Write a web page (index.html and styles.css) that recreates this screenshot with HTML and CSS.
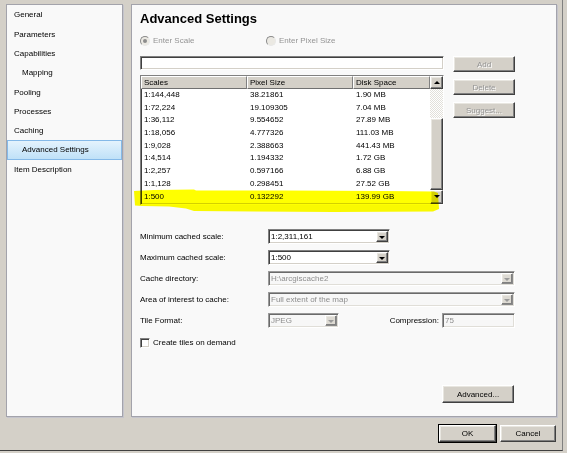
FILE: index.html
```html
<!DOCTYPE html>
<html lang="en">
<head>
    <meta charset="UTF-8">
    <meta name="viewport" content="width=device-width, initial-scale=1.0">
    <title>Service Properties - Advanced Settings</title>
    <link rel="stylesheet" href="styles.css">
</head>
<body>
    <div class="window">
        <div class="panes">
            <ul class="nav">
                <li>General</li>
                <li>Parameters</li>
                <li>Capabilities</li>
                <li class="sub">Mapping</li>
                <li>Pooling</li>
                <li>Processes</li>
                <li>Caching</li>
                <li class="sub selected">Advanced Settings</li>
                <li>Item Description</li>
            </ul>

            <section class="page">
                <h1>Advanced Settings</h1>

                <div class="radios">
                    <label class="radio first"><span class="dot checked"></span>Enter Scale</label>
                    <label class="radio"><span class="dot"></span>Enter Pixel Size</label>
                </div>

                <div class="scales">
                    <div class="scales-main">
                        <div class="field sunken"></div>
                        <div class="list sunken">
                            <div class="grid">
                                <div class="head"><span>Scales</span><span>Pixel Size</span><span>Disk Space</span></div>
                                <div class="row"><span>1:144,448</span><span>38.21861</span><span>1.90 MB</span></div>
                                <div class="row"><span>1:72,224</span><span>19.109305</span><span>7.04 MB</span></div>
                                <div class="row"><span>1:36,112</span><span>9.554652</span><span>27.89 MB</span></div>
                                <div class="row"><span>1:18,056</span><span>4.777326</span><span>111.03 MB</span></div>
                                <div class="row"><span>1:9,028</span><span>2.388663</span><span>441.43 MB</span></div>
                                <div class="row"><span>1:4,514</span><span>1.194332</span><span>1.72 GB</span></div>
                                <div class="row"><span>1:2,257</span><span>0.597166</span><span>6.88 GB</span></div>
                                <div class="row"><span>1:1,128</span><span>0.298451</span><span>27.52 GB</span></div>
                                <div class="row"><span>1:500</span><span>0.132292</span><span>139.99 GB</span></div>
                            </div>
                            <div class="vscroll">
                                <div class="arrow up raised"></div>
                                <div class="track"></div>
                                <div class="thumb raised"></div>
                                <div class="arrow down raised"></div>
                            </div>
                        </div>
                    </div>
                    <div class="side-buttons">
                        <button class="btn raised" disabled>Add</button>
                        <button class="btn raised" disabled>Delete</button>
                        <button class="btn raised" disabled>Suggest...</button>
                    </div>
                </div>

                <div class="form">
                    <span class="label">Minimum cached scale:</span>
                    <div class="combo short"><span class="value">1:2,311,161</span><span class="drop raised"></span></div>

                    <span class="label">Maximum cached scale:</span>
                    <div class="combo short"><span class="value">1:500</span><span class="drop raised"></span></div>

                    <span class="label">Cache directory:</span>
                    <div class="combo disabled"><span class="value">H:\arcgiscache2</span><span class="drop raised"></span></div>

                    <span class="label">Area of interest to cache:</span>
                    <div class="combo disabled"><span class="value">Full extent of the map</span><span class="drop raised"></span></div>

                    <span class="label">Tile Format:</span>
                    <div class="tile-row">
                        <div class="combo disabled tiny"><span class="value">JPEG</span><span class="drop raised"></span></div>
                        <span class="compression">Compression:</span>
                        <div class="field sunken quality">75</div>
                    </div>
                </div>

                <label class="checkbox"><span class="box sunken"></span>Create tiles on demand</label>

                <div class="footer">
                    <button class="btn raised wide">Advanced...</button>
                </div>

                <!-- marker stroke over the last scale row -->
                <svg class="marker" width="306" height="24" viewBox="0 0 306 24">
                    <polygon points="0,2 20,1 60,0.5 62,1.5 150,1.5 250,2 300,2.5 304,4 305,20 299,22.5 200,23 120,22.5 60,22 52,19.5 35,17.5 8,17 1,16.5" />
                </svg>
            </section>
        </div>

        <div class="actions">
            <button class="btn raised default">OK</button>
            <button class="btn raised">Cancel</button>
        </div>
    </div>
</body>
</html>
```

FILE: styles.css
```css
body {
    margin: 0;
    background-color: #d4d0c8;
    font-family: "Liberation Sans", Arial, sans-serif;
    font-size: 8px;
    color: #000;
}
.window {
    width: 563px;
    height: 451px;
    box-sizing: border-box;
    border-right: 1px solid #808080;
    border-bottom: 1px solid #404040;
    padding: 4px 5px 0 6px;
    display: flex;
    flex-direction: column;
}
.panes {
    display: flex;
    gap: 8px;
    height: 413px;
}

/* beveled borders */
.sunken {
    border: 1px solid;
    border-color: #808080 #fff #fff #808080;
    box-shadow: inset 1px 1px #404040, inset -1px -1px #d4d0c8;
    box-sizing: border-box;
}
.raised {
    border: 1px solid;
    border-color: #fff #404040 #404040 #fff;
    box-shadow: inset -1px -1px #808080, inset 1px 1px #e8e6e0;
    background-color: #d4d0c8;
    box-sizing: border-box;
}

/* left navigation */
.nav {
    width: 117px;
    box-sizing: border-box;
    margin: 0;
    padding: 0.35px 0 0;
    list-style: none;
    background-color: #f9f9f9;
    border: 1px solid #a3a3ab;
    box-shadow: 1px 1px #c4c4cc;
}
.nav li {
    height: 19.3px;
    line-height: 19.3px;
    padding-left: 7px;
    box-sizing: border-box;
    white-space: nowrap;
}
.nav li.sub {
    padding-left: 15px;
}
.nav li.selected {
    padding-left: 14px;
    line-height: 17.3px;
    border: 1px solid #84b9e8;
    background: linear-gradient(#e4f3fd, #bfe1f8);
}

/* right page */
.page {
    position: relative;
    width: 426px;
    box-sizing: border-box;
    background-color: #f9f9f9;
    border: 1px solid #a3a3ab;
    box-shadow: 1px 1px #c4c4cc;
    padding: 6px 41px 13px 8px;
    display: flex;
    flex-direction: column;
}
h1 {
    margin: 0;
    font-size: 13px;
    line-height: 16px;
    height: 16px;
    font-weight: bold;
}
.radios {
    display: flex;
    margin-top: 7px;
    height: 13px;
    align-items: center;
    color: #949494;
}
.radio {
    display: flex;
    align-items: center;
    gap: 3px;
}
.radio.first {
    width: 126px;
}
.dot {
    width: 10px;
    height: 10px;
    box-sizing: border-box;
    border-radius: 50%;
    border: 1px solid;
    border-color: #8a8a8a #e8e8e8 #e8e8e8 #8a8a8a;
    background-color: #ebe9e3;
    position: relative;
}
.dot.checked::after {
    content: "";
    position: absolute;
    left: 2px;
    top: 2px;
    width: 4px;
    height: 4px;
    border-radius: 50%;
    background-color: #8c8c8c;
}

/* scales list */
.scales {
    display: flex;
    gap: 9px;
    margin-top: 9px;
}
.scales-main {
    width: 304px;
}
.field {
    height: 14px;
    background-color: #fff;
}
.list {
    margin-top: 5px;
    height: 130px;
    background-color: #fff;
    display: flex;
}
.grid {
    width: 289px;
}
.head, .row {
    display: grid;
    grid-template-columns: 106px 106px 77px;
}
.head span {
    height: 13px;
    line-height: 11px;
    padding-left: 2px;
    border: 1px solid;
    border-color: #fff #808080 #707070 #fff;
    background-color: #d4d0c8;
    box-sizing: border-box;
}
.row {
    height: 12.7px;
    line-height: 12.7px;
}
.row span {
    padding-left: 3px;
}
.vscroll {
    width: 13px;
    display: flex;
    flex-direction: column;
}
.arrow {
    height: 13px;
    position: relative;
}
.arrow::after {
    content: "";
    position: absolute;
    left: 3px;
    top: 4px;
    border-left: 3px solid transparent;
    border-right: 3px solid transparent;
}
.arrow.up::after {
    border-bottom: 3px solid #000;
}
.arrow.down {
    flex: 1;
}
.arrow.down::after {
    border-top: 3px solid #000;
}
.track {
    height: 29px;
    background-color: #fff;
    background-image: conic-gradient(#e2e0da 25%, #fff 0 50%, #e2e0da 0 75%, #fff 0);
    background-size: 2px 2px;
}
.thumb {
    height: 72px;
}

/* buttons */
.side-buttons {
    display: flex;
    flex-direction: column;
    gap: 7px;
}
.btn {
    font-family: inherit;
    font-size: 8px;
    color: #000;
    padding: 0;
    cursor: pointer;
}
.side-buttons .btn {
    width: 62px;
    height: 16px;
}
.btn:disabled {
    color: #959595;
    text-shadow: 1px 1px #fff;
    cursor: default;
}

/* settings form */
.form {
    display: grid;
    grid-template-columns: 128px 1fr;
    grid-auto-rows: 15px;
    row-gap: 6px;
    margin-top: 24px;
    align-items: center;
}
.combo {
    display: flex;
    height: 15px;
    box-sizing: border-box;
    border: 1px solid;
    border-color: #808080 #fff #fff #808080;
    box-shadow: inset 1px 1px #404040, inset -1px -1px #d4d0c8;
    background-color: #fff;
    padding: 1px;
}
.combo.short {
    width: 122px;
}
.combo.tiny {
    width: 71px;
}
.combo .value {
    flex: 1;
    padding-left: 1px;
    line-height: 11px;
    white-space: nowrap;
}
.drop {
    width: 12px;
    position: relative;
}
.drop::after {
    content: "";
    position: absolute;
    left: 2px;
    top: 4px;
    border-left: 3px solid transparent;
    border-right: 3px solid transparent;
    border-top: 3px solid #000;
}
.combo.disabled {
    background-color: #f7f7f7;
    border-color: #9a9a9a #fff #fff #9a9a9a;
    box-shadow: inset 1px 1px #6a6a6a, inset -1px -1px #e0ded8;
}
.combo.disabled .value {
    color: #8e8e8e;
}
.combo.disabled .drop {
    background-color: #dddad3;
    border-color: #fff #8a8a8a #8a8a8a #fff;
}
.combo.disabled .drop::after {
    border-top-color: #9a9a9a;
}
.tile-row {
    display: flex;
    align-items: center;
    height: 15px;
}
.compression {
    margin-left: auto;
    margin-right: 3px;
}
.quality {
    width: 73px;
    height: 15px;
    background-color: #f7f7f7;
    color: #8e8e8e;
    line-height: 13px;
    padding-left: 2px;
    border-color: #9a9a9a #fff #fff #9a9a9a;
    box-shadow: inset 1px 1px #6a6a6a, inset -1px -1px #e0ded8;
}
.checkbox {
    display: flex;
    align-items: center;
    gap: 3px;
    height: 13px;
    margin-top: 8px;
}
.box {
    width: 10px;
    height: 10px;
    background-color: #fff;
}
.footer {
    margin-top: auto;
    display: flex;
    justify-content: flex-end;
    padding-right: 1px;
}
.btn.wide {
    width: 72px;
    height: 18px;
}

/* dialog buttons */
.actions {
    display: flex;
    justify-content: flex-end;
    gap: 4px;
    margin-top: 8px;
    padding-right: 1px;
}
.actions .btn {
    width: 56px;
    height: 17px;
}
.actions .btn.default {
    width: 57px;
    outline: 1px solid #000;
    outline-offset: 0;
}

/* highlighter stroke */
.marker {
    position: absolute;
    left: 2px;
    top: 184px;
    mix-blend-mode: multiply;
    pointer-events: none;
}
.marker polygon {
    fill: #ffff00;
}
```
